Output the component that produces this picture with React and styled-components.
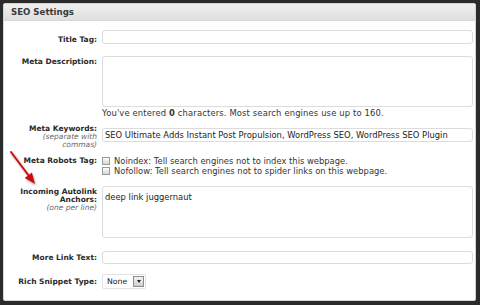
import React from 'react'
import styled, { createGlobalStyle } from 'styled-components'

const GlobalStyle = createGlobalStyle`
  html, body {
    margin: 0;
    padding: 0;
    background: #2b2b2b;
  }
  body {
    font-family: "DejaVu Sans", Verdana, sans-serif;
  }
`

const Frame = styled.div`
  width: 480px;
  height: 305px;
  box-sizing: border-box;
  padding: 3px 4px 4px 3px;
  position: relative;
`

const Panel = styled.div`
  background: #fff;
  border: 1px solid #d4d4d4;
  border-radius: 2px;
  height: 100%;
  box-sizing: border-box;
  overflow: hidden;
`

const Header = styled.div`
  height: 17px;
  box-sizing: border-box;
  padding: 0 7px;
  display: flex;
  align-items: center;
  background: linear-gradient(#f0f0f0, #dedede);
  border-bottom: 1px solid #d8d8d8;
  font-size: 8.6px;
  font-weight: bold;
  color: #3a3a3a;
`

const Body = styled.div`
  padding: 9px 2px 0 0;
`

const Row = styled.div`
  display: grid;
  grid-template-columns: 93px 1fr;
  column-gap: 5px;
  align-items: start;
  margin-bottom: ${(p) => p.$gap || 0}px;
`

const Label = styled.div`
  text-align: right;
  font-size: 7.5px;
  font-weight: bold;
  color: #2a2a2a;
  line-height: 8px;
  padding-top: ${(p) => p.$top || 0}px;
`

const Hint = styled.div`
  font-weight: normal;
  font-style: italic;
  color: #6a6a6a;
  font-size: 7.5px;
  line-height: 7.5px;
`

const Field = styled.div`
  padding-top: ${(p) => p.$top || 0}px;
  font-size: 8.4px;
  color: #333;
`

const TextInput = styled.div`
  height: ${(p) => p.$h || 14}px;
  box-sizing: border-box;
  border: 1px solid #dcdcdc;
  border-radius: 3px;
  background: #fff;
  padding: ${(p) => (p.$area ? '5px 2px' : '0 2px')};
  display: flex;
  align-items: ${(p) => (p.$area ? 'flex-start' : 'center')};
  font-size: 8.4px;
  color: #222;
  white-space: nowrap;
`

const Note = styled.div`
  padding-top: 1px;
  font-size: 8.4px;
  letter-spacing: 0.15px;
  color: #333;
  line-height: 10px;
  white-space: nowrap;
`

const CheckRow = styled.label`
  display: flex;
  align-items: center;
  gap: 4px;
  height: 10px;
  font-size: 8.4px;
  color: #333;
  white-space: nowrap;
`

const Box = styled.span`
  width: 8px;
  height: 8px;
  flex: none;
  box-sizing: border-box;
  border: 1px solid #9a9a9a;
  background: linear-gradient(#fdfdfd, #d6d6d6);
`

const Select = styled.div`
  width: 44px;
  height: 15px;
  box-sizing: border-box;
  border: 1px solid #e2e2e2;
  border-radius: 2px;
  display: flex;
  align-items: center;
  justify-content: space-between;
  padding: 0 1px 0 4px;
  font-size: 7.8px;
  color: #222;
`

const Drop = styled.span`
  width: 11px;
  height: 11px;
  box-sizing: border-box;
  border: 1px solid #8c8c8c;
  background: linear-gradient(#f2f2f2, #cfcfcf);
  display: flex;
  align-items: center;
  justify-content: center;
  &::after {
    content: '';
    border-left: 2.5px solid transparent;
    border-right: 2.5px solid transparent;
    border-top: 3px solid #222;
  }
`

const Arrow = styled.svg`
  position: absolute;
  left: 8px;
  top: 144px;
  width: 40px;
  height: 44px;
  overflow: visible;
`

export default function App() {
  return (
    <Frame>
      <GlobalStyle />
      <Panel>
        <Header>SEO Settings</Header>
        <Body>
          <Row $gap={12}>
            <Label $top={6}>Title Tag:</Label>
            <Field>
              <TextInput />
            </Field>
          </Row>

          <Row $gap={7}>
            <Label $top={2}>Meta Description:</Label>
            <Field>
              <TextInput $h={51} $area />
              <Note>
                You've entered <b>0</b> characters. Most search engines use up to 160.
              </Note>
            </Field>
          </Row>

          <Row $gap={7}>
            <Label>
              Meta Keywords:
              <Hint>(separate with</Hint>
              <Hint>commas)</Hint>
            </Label>
            <Field $top={3}>
              <TextInput>SEO Ultimate Adds Instant Post Propulsion, WordPress SEO, WordPress SEO Plugin</TextInput>
            </Field>
          </Row>

          <Row $gap={10}>
            <Label $top={2}>Meta Robots Tag:</Label>
            <Field $top={1}>
              <CheckRow>
                <Box />
                Noindex: Tell search engines not to index this webpage.
              </CheckRow>
              <CheckRow>
                <Box />
                Nofollow: Tell search engines not to spider links on this webpage.
              </CheckRow>
            </Field>
          </Row>

          <Row $gap={13}>
            <Label $top={2}>
              Incoming Autolink
              <br />
              Anchors:
              <Hint>(one per line)</Hint>
            </Label>
            <Field>
              <TextInput $h={52} $area>deep link juggernaut</TextInput>
            </Field>
          </Row>

          <Row $gap={10}>
            <Label $top={3}>More Link Text:</Label>
            <Field>
              <TextInput $h={13} />
            </Field>
          </Row>

          <Row>
            <Label $top={4}>Rich Snippet Type:</Label>
            <Field>
              <Select>
                None
                <Drop />
              </Select>
            </Field>
          </Row>
        </Body>
      </Panel>
      <Arrow viewBox="0 0 40 44">
        <defs>
          <filter id="sh" x="-50%" y="-50%" width="200%" height="200%">
            <feDropShadow dx="1" dy="1.5" stdDeviation="1" floodColor="#000" floodOpacity="0.35" />
          </filter>
        </defs>
        <g filter="url(#sh)">
          <line x1="3" y1="8" x2="21" y2="32" stroke="#cc1111" strokeWidth="2" strokeLinecap="round" />
          <polygon points="27,40 16.7,34 23.9,28.5" fill="#cc1111" />
        </g>
      </Arrow>
    </Frame>
  )
}
